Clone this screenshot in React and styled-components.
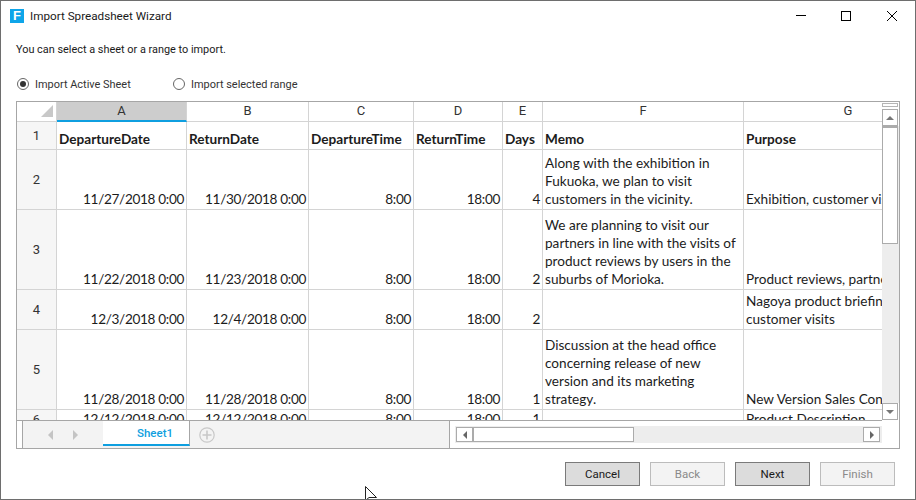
import React from "react";
import styled, { createGlobalStyle } from "styled-components";

const Global = createGlobalStyle`
  html, body { margin: 0; padding: 0; background: #fff; }
  #root { width: 916px; height: 500px; }
`;

const UI = `Roboto, "Noto Sans", sans-serif`;
const CELL = `Lato, "Liberation Sans", sans-serif`;
const LINE = "#d4d4d4";
const FRAME = "#a6a6a6";
const BLUE = "#0f9fe0";

const Window = styled.div`
  position: relative;
  box-sizing: border-box;
  width: 916px;
  height: 500px;
  overflow: hidden;
  border: 1px solid #6e6e6e;
  background: #fff;
  display: flex;
  flex-direction: column;
  font-family: ${UI};
  color: #1a1a1a;
`;
const TitleBar = styled.div`
  height: 30px;
  display: flex;
  align-items: center;
  padding-left: 9px;
  flex: none;
`;
const LogoBadge = styled.span`
  width: 14px;
  height: 14px;
  background: #0ea5e9;
  color: #fff;
  font: 700 13px/14px "Liberation Sans", sans-serif;
  text-align: center;
  flex: none;
  margin-right: 6px;
`;
const Title = styled.span`
  font-size: 11.7px;
  flex: 1;
`;
const Controls = styled.div`
  display: flex;
  height: 100%;
`;
const WinButton = styled.div`
  width: 46px;
  display: flex;
  align-items: center;
  justify-content: center;
`;
const Content = styled.div`
  display: flex;
  flex-direction: column;
  padding: 0 15px;
  flex: 1;
  min-height: 0;
`;
const Description = styled.div`
  height: 18px;
  line-height: 18px;
  margin-top: 10px;
  font-size: 10.9px;
`;
const RadioRow = styled.div`
  display: flex;
  align-items: center;
  height: 16px;
  margin-top: 17px;
  padding-left: 1px;
`;
const RadioItem = styled.label`
  display: flex;
  align-items: center;
  gap: 6px;
  width: ${p => p.$width}px;
  font-size: 10.95px;
  color: #333;
`;
const RadioDot = styled.span`
  box-sizing: border-box;
  width: 12px;
  height: 12px;
  border-radius: 50%;
  border: 1px solid #666;
  background: #fff;
  display: flex;
  align-items: center;
  justify-content: center;
  flex: none;
  &::after {
    content: "";
    width: 6px;
    height: 6px;
    border-radius: 50%;
    background: ${p => (p.$on ? "#333" : "transparent")};
  }
`;
const SheetFrame = styled.div`
  box-sizing: border-box;
  height: 348px;
  margin-top: 9px;
  border: 1px solid ${FRAME};
  display: flex;
`;
const SheetMain = styled.div`
  width: 865px;
  display: flex;
  flex-direction: column;
  flex: none;
`;
const GridClip = styled.div`
  height: 318px;
  overflow: hidden;
  flex: none;
`;
const Grid = styled.div`
  display: grid;
  width: 936px;
  grid-template-columns: 40px 130px 122px 105px 89px 40px 201px 209px;
  grid-template-rows: 20px 28px 60px 80px 40px 80px 20px;
`;
const Corner = styled.div`
  box-sizing: border-box;
  border-right: 1px solid ${LINE};
  border-bottom: 1px solid ${LINE};
  display: flex;
  align-items: flex-start;
  padding: 3px 0 0 24px;
`;
const ColHead = styled.div`
  box-sizing: border-box;
  border-right: 1px solid ${LINE};
  border-bottom: ${p => (p.$active ? `2px solid ${BLUE}` : `1px solid ${LINE}`)};
  background: ${p => (p.$active ? "#cdcdcd" : "#fff")};
  font-size: 13px;
  line-height: 18px;
  text-align: center;
  color: #333;
`;
const RowHead = styled.div`
  box-sizing: border-box;
  border-right: 1px solid ${LINE};
  border-bottom: 1px solid ${LINE};
  background: #f6f6f6;
  display: flex;
  align-items: center;
  justify-content: center;
  font-size: 13px;
  color: #333;
`;
const Cell = styled.div`
  box-sizing: border-box;
  border-right: 1px solid ${LINE};
  border-bottom: 1px solid ${LINE};
  padding: 0 2px 1px 2px;
  display: flex;
  align-items: flex-end;
  justify-content: ${p => (p.$right ? "flex-end" : "flex-start")};
  overflow: hidden;
  font-family: ${CELL};
  font-size: 13.6px;
  font-weight: ${p => (p.$bold ? 700 : 400)};
  letter-spacing: ${p => (p.$right ? "-0.33px" : "0")};
  line-height: 18px;
  white-space: pre;
  color: #1c1c1c;
`;
const BottomBar = styled.div`
  height: 28px;
  flex: none;
  box-sizing: border-box;
  border-top: 1px solid ${FRAME};
  display: flex;
`;
const TabArea = styled.div`
  width: 432px;
  flex: none;
  background: #f3f3f3;
  display: flex;
  align-items: flex-start;
`;
const Grip = styled.div`
  width: 5px;
  height: 100%;
  flex: none;
  background: #fff;
  border-right: 1px solid ${FRAME};
`;
const TabNav = styled.div`
  width: 80px;
  height: 100%;
  flex: none;
  display: flex;
  align-items: center;
  padding-left: 25px;
  box-sizing: border-box;
  gap: 20px;
`;
const Tab = styled.div`
  box-sizing: border-box;
  width: 87px;
  height: 25px;
  flex: none;
  background: #fff;
  border-right: 1px solid ${FRAME};
  border-bottom: 2px solid ${BLUE};
  color: ${BLUE};
  font-size: 11.5px;
  font-weight: 500;
  line-height: 25px;
  padding-left: 18px;
  text-align: center;
`;
const AddTab = styled.div`
  height: 100%;
  display: flex;
  align-items: center;
  margin-left: 9px;
`;
const Splitter = styled.div`
  box-sizing: border-box;
  width: 6px;
  flex: none;
  background: #fff;
  border-left: 1px solid ${FRAME};
`;
const HScrollWrap = styled.div`
  flex: 1;
  padding-top: 5px;
`;
const HTrack = styled.div`
  height: 17px;
  background: #ededed;
  display: flex;
  align-items: center;
  padding-left: 1px;
  padding-right: 2px;
`;
const ScrollButton = styled.div`
  box-sizing: border-box;
  width: ${p => p.$w}px;
  height: ${p => p.$h}px;
  flex: none;
  background: #fff;
  border: 1px solid #ababab;
  display: flex;
  align-items: center;
  justify-content: center;
`;
const HThumb = styled.div`
  box-sizing: border-box;
  width: 161px;
  height: 15px;
  background: #fff;
  border: 1px solid #ababab;
  flex: none;
`;
const Spacer = styled.div`
  flex: 1;
`;
const VScroll = styled.div`
  width: 17px;
  flex: none;
  display: flex;
  flex-direction: column;
`;
const VGrip = styled.div`
  box-sizing: border-box;
  width: 16px;
  height: 4px;
  margin: 1px 0 2px;
  border: 1px solid #b5b5b5;
  background: #fff;
`;
const VTrack = styled.div`
  flex: none;
  height: 277px;
  background: #ededed;
`;
const VThumb = styled.div`
  box-sizing: border-box;
  width: 16px;
  height: 118px;
  background: #fff;
  border: 1px solid #ababab;
  border-top-width: 2px;
`;
const Footer = styled.div`
  display: flex;
  justify-content: flex-end;
  gap: 10px;
  margin-top: 13px;
  padding-right: 5px;
`;
const Button = styled.div`
  box-sizing: border-box;
  width: 75px;
  height: 24px;
  background: ${p => (p.$disabled ? "#f3f3f3" : "#dcdcdc")};
  border: 1px solid ${p => (p.$disabled ? "#bcbcbc" : "#7a7a7a")};
  color: ${p => (p.$disabled ? "#8a8a8a" : "#1a1a1a")};
  font-size: 11.5px;
  line-height: 22px;
  text-align: center;
`;
const Pointer = styled.svg`
  position: absolute;
  left: 363px;
  top: 484px;
`;

const Triangle = ({ dir, color = "#555", size = 5 }) => {
  const pts = {
    up: `0,${size} ${size},0 ${size * 2},${size}`,
    down: `0,0 ${size},${size} ${size * 2},0`,
    left: `${size},0 0,${size} ${size},${size * 2}`,
    right: `0,0 ${size},${size} 0,${size * 2}`,
  }[dir];
  const horiz = dir === "up" || dir === "down";
  return (
    <svg width={horiz ? size * 2 : size} height={horiz ? size : size * 2}>
      <polygon points={pts} fill={color} />
    </svg>
  );
};

const cols = ["A", "B", "C", "D", "E", "F", "G"];
const rows = [
  ["11/27/2018 0:00", "11/30/2018 0:00", "8:00", "18:00", "4", "Along with the exhibition in\nFukuoka, we plan to visit\ncustomers in the vicinity.", "Exhibition, customer visits"],
  ["11/22/2018 0:00", "11/23/2018 0:00", "8:00", "18:00", "2", "We are planning to visit our\npartners in line with the visits of\nproduct reviews by users in the\nsuburbs of Morioka.", "Product reviews, partner visits"],
  ["12/3/2018 0:00", "12/4/2018 0:00", "8:00", "18:00", "2", "", "Nagoya product briefing,\ncustomer visits"],
  ["11/28/2018 0:00", "11/28/2018 0:00", "8:00", "18:00", "1", "Discussion at the head office\nconcerning release of new\nversion and its marketing\nstrategy.", "New Version Sales Conference"],
  ["12/12/2018 0:00", "12/12/2018 0:00", "8:00", "18:00", "1", "", "Product Description"],
];
const headers = ["DepartureDate", "ReturnDate", "DepartureTime", "ReturnTime", "Days", "Memo", "Purpose"];

export default function App() {
  return (
    <>
      <Global />
      <Window>
        <TitleBar>
          <LogoBadge>F</LogoBadge>
          <Title>Import Spreadsheet Wizard</Title>
          <Controls>
            <WinButton>
              <svg width="12" height="10"><line x1="2" y1="4.5" x2="12" y2="4.5" stroke="#000" /></svg>
            </WinButton>
            <WinButton>
              <svg width="10" height="10"><rect x="0.5" y="0.5" width="9" height="9" fill="none" stroke="#000" /></svg>
            </WinButton>
            <WinButton>
              <svg width="10" height="10"><path d="M0 0L10 10M10 0L0 10" stroke="#000" strokeWidth="1" /></svg>
            </WinButton>
          </Controls>
        </TitleBar>
        <Content>
          <Description>You can select a sheet or a range to import.</Description>
          <RadioRow>
            <RadioItem $width={156}><RadioDot $on />Import Active Sheet</RadioItem>
            <RadioItem $width={200}><RadioDot />Import selected range</RadioItem>
          </RadioRow>
          <SheetFrame>
            <SheetMain>
              <GridClip>
                <Grid>
                  <Corner>
                    <svg width="12" height="12"><polygon points="12,0 12,12 0,12" fill="#c8c8c8" /></svg>
                  </Corner>
                  {cols.map((c, i) => <ColHead key={c} $active={i === 0}>{c}</ColHead>)}
                  <RowHead>1</RowHead>
                  {headers.map(h => <Cell key={h} $bold>{h}</Cell>)}
                  {rows.map((r, i) => (
                    <React.Fragment key={i}>
                      <RowHead>{i + 2}</RowHead>
                      {r.map((v, j) => <Cell key={j} $right={j < 5}>{v}</Cell>)}
                    </React.Fragment>
                  ))}
                </Grid>
              </GridClip>
              <BottomBar>
                <TabArea>
                  <Grip />
                  <TabNav>
                    <Triangle dir="left" color="#c4c4c4" />
                    <Triangle dir="right" color="#c4c4c4" />
                  </TabNav>
                  <Tab>Sheet1</Tab>
                  <AddTab>
                    <svg width="16" height="16">
                      <circle cx="8" cy="8" r="7.2" fill="none" stroke="#c8c8c8" strokeWidth="1.2" />
                      <path d="M8 3.5V12.5M3.5 8H12.5" stroke="#c8c8c8" strokeWidth="1.6" />
                    </svg>
                  </AddTab>
                </TabArea>
                <Splitter />
                <HScrollWrap>
                  <HTrack>
                    <ScrollButton $w={17} $h={15}><Triangle dir="left" size={4} color="#666" /></ScrollButton>
                    <HThumb />
                    <Spacer />
                    <ScrollButton $w={17} $h={15}><Triangle dir="right" size={4} color="#666" /></ScrollButton>
                  </HTrack>
                </HScrollWrap>
              </BottomBar>
            </SheetMain>
            <VScroll>
              <VGrip />
              <ScrollButton $w={16} $h={17}><Triangle dir="up" size={4} color="#777" /></ScrollButton>
              <VTrack><VThumb /></VTrack>
              <ScrollButton $w={16} $h={17}><Triangle dir="down" size={4} color="#777" /></ScrollButton>
            </VScroll>
          </SheetFrame>
          <Footer>
            <Button>Cancel</Button>
            <Button $disabled>Back</Button>
            <Button>Next</Button>
            <Button $disabled>Finish</Button>
          </Footer>
        </Content>
        <Pointer width="14" height="16" viewBox="0 0 14 16">
          <path d="M1.5 1.5V15.5L5 12.5H12.5Z" fill="#fff" stroke="#222" strokeWidth="1" />
        </Pointer>
      </Window>
    </>
  );
}
